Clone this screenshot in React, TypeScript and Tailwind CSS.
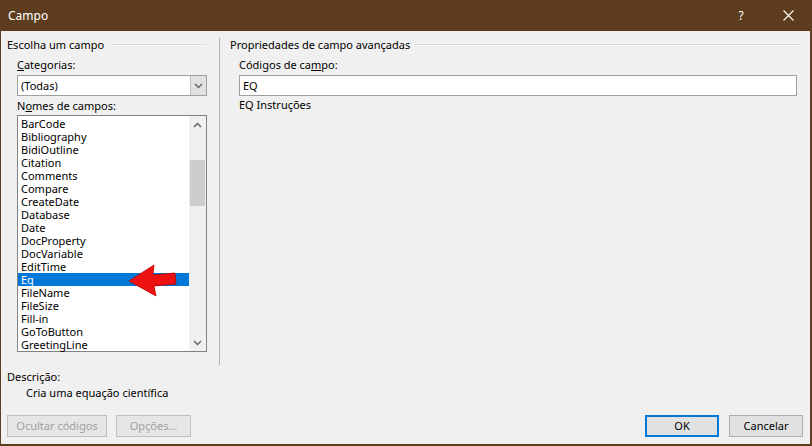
import React from "react";

const fields = [
  "BarCode",
  "Bibliography",
  "BidiOutline",
  "Citation",
  "Comments",
  "Compare",
  "CreateDate",
  "Database",
  "Date",
  "DocProperty",
  "DocVariable",
  "EditTime",
  "Eq",
  "FileName",
  "FileSize",
  "Fill-in",
  "GoToButton",
  "GreetingLine",
];

function Chevron({ up }: { up?: boolean }) {
  return (
    <svg width="9" height="6" viewBox="0 0 9 6" className="block">
      <path
        d={up ? "M1 5 L4.5 1.5 L8 5" : "M1 1 L4.5 4.5 L8 1"}
        fill="none"
        stroke="#606060"
        strokeWidth="1.4"
      />
    </svg>
  );
}

function GroupHeader({ title }: { title: string }) {
  return (
    <div className="flex items-center gap-[6px] h-[16px]">
      <span className="whitespace-nowrap">{title}</span>
      <div className="flex-1 flex flex-col">
        <div className="h-px bg-[#dcdcdc]" />
        <div className="h-px bg-white" />
      </div>
    </div>
  );
}

function Button({
  children,
  disabled,
  primary,
  className = "",
}: {
  children: React.ReactNode;
  disabled?: boolean;
  primary?: boolean;
  className?: string;
}) {
  return (
    <div
      className={
        "h-[22px] flex items-center justify-center bg-[#e1e1e1] " +
        (primary
          ? "border-2 border-[#0078d7] text-black "
          : disabled
            ? "border border-[#bfbfbf] bg-[#e6e6e6] text-[#a0a0a0] "
            : "border border-[#adadad] text-black ") +
        className
      }
    >
      {children}
    </div>
  );
}

export default function App() {
  return (
    <div
      className="w-[812px] h-[446px] bg-[#5d3d1e] flex flex-col text-[11px] leading-[16px] text-black"
      style={{ fontFamily: '"Noto Sans", "Open Sans", sans-serif' }}
    >
      {/* title bar */}
      <div className="h-[31px] flex items-center pl-[8px] text-white text-[12px]">
        <span className="flex-1">Campo</span>
        <span className="w-[12px] text-center mr-[36px]">?</span>
        <svg width="11" height="11" viewBox="0 0 11 11" className="mr-[18px]">
          <path d="M0.5 0.5 L10.5 10.5 M10.5 0.5 L0.5 10.5" stroke="white" strokeWidth="1.1" />
        </svg>
      </div>

      <div className="flex-1 bg-[#f0f0f0] ml-px mr-[2px] mb-[2px] flex flex-col">
        <div className="flex h-[334px]">
          {/* left column */}
          <div className="w-[218px] pl-[6px] pr-[12px] pt-[6px]">
            <GroupHeader title="Escolha um campo" />
            <div className="pl-[10px] pt-[4px]">
              <div>
                <span className="underline">C</span>ategorias:
              </div>
              <div className="mt-[2px] h-[21px] border border-[#a0a0a0] bg-white flex">
                <div className="flex-1 pl-[3px] flex items-center">(Todas)</div>
                <div className="w-[16px] bg-[#e1e1e1] border-l border-[#c0c0c0] flex items-center justify-center">
                  <Chevron />
                </div>
              </div>
              <div className="mt-[2px]">
                N<span className="underline">o</span>mes de campos:
              </div>
              <div className="relative mt-px h-[237px] border border-[#828282] bg-white flex">
                <div className="flex-1 pt-px">
                  {fields.map((f) => (
                    <div
                      key={f}
                      className={
                        "h-[13px] leading-[13px] pl-[3px] " +
                        (f === "Eq" ? "bg-[#0078d7] text-white" : "")
                      }
                    >
                      {f}
                    </div>
                  ))}
                </div>
                <div className="w-[17px] bg-[#f0f0f0] flex flex-col items-center">
                  <div className="h-[17px] flex items-center justify-center">
                    <Chevron up />
                  </div>
                  <div className="mt-[27px] h-[46px] w-[15px] bg-[#cdcdcd]" />
                  <div className="flex-1" />
                  <div className="h-[17px] flex items-center justify-center">
                    <Chevron />
                  </div>
                </div>
                <svg
                  width="70"
                  height="40"
                  viewBox="0 0 70 40"
                  className="absolute left-[108px] top-[146px]"
                >
                  <path
                    d="M3 19 L28 3 L27 13 L49 11 L50 22 L28 24 L30 34 Z"
                    fill="#ee1111"
                    stroke="#c00000"
                    strokeWidth="0.8"
                    strokeLinejoin="round"
                  />
                </svg>
              </div>
            </div>
          </div>

          {/* divider */}
          <div className="w-px bg-[#b4b4b4] mt-[7px]" />

          {/* right column */}
          <div className="flex-1 pl-[10px] pr-[10px] pt-[6px]">
            <GroupHeader title="Propriedades de campo avançadas" />
            <div className="pl-[9px] pt-[4px] pr-[3px]">
              <div>
                Códigos de ca<span className="underline">m</span>po:
              </div>
              <div className="mt-[2px] h-[21px] border border-[#a0a0a0] bg-white pl-[3px] flex items-center">
                EQ
              </div>
              <div className="mt-[1px]">EQ Instruções</div>
            </div>
          </div>
        </div>

        {/* description */}
        <div className="pl-[6px] pt-[4px]">
          <div>Descrição:</div>
          <div className="pl-[19px]">Cria uma equação científica</div>
        </div>

        {/* buttons */}
        <div className="flex items-center pl-[6px] pr-[7px] mt-[14px]">
          <Button disabled className="w-[100px]">
            Ocultar códigos
          </Button>
          <Button disabled className="w-[75px] ml-[9px]">
            Opções...
          </Button>
          <div className="flex-1" />
          <Button primary className="w-[74px]">
            OK
          </Button>
          <Button className="w-[74px] ml-[10px]">Cancelar</Button>
        </div>
      </div>
    </div>
  );
}
